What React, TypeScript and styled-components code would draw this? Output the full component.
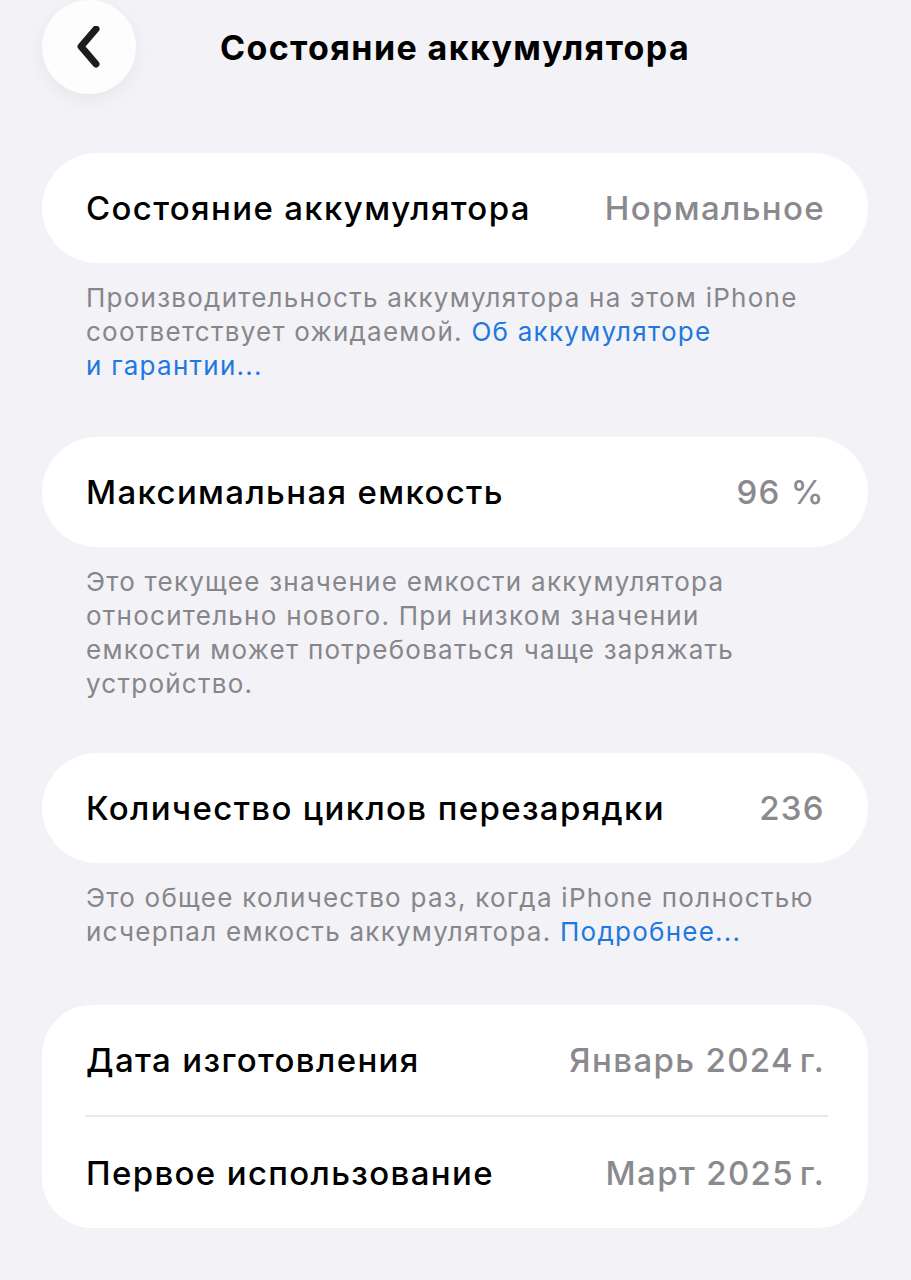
import React from "react";
import styled, { createGlobalStyle } from "styled-components";

const GlobalStyle = createGlobalStyle`
  html, body {
    margin: 0;
    padding: 0;
    background: #f2f2f7;
  }
  body {
    font-family: Inter, "Noto Sans", "Liberation Sans", sans-serif;
    -webkit-font-smoothing: antialiased;
  }
`;

const Page = styled.div`
  min-height: 1280px;
  background: #f2f2f7;
  padding: 0 43px 40px 42px;
  box-sizing: border-box;
`;

const Header = styled.header`
  display: grid;
  grid-template-columns: 94px 1fr 94px;
  align-items: center;
  height: 94px;
  margin-bottom: 59px;
`;

const BackButton = styled.button`
  width: 94px;
  height: 94px;
  border-radius: 50%;
  border: none;
  background: #fdfdfe;
  box-shadow: 0 6px 18px rgba(0, 0, 0, 0.05);
  display: flex;
  align-items: center;
  justify-content: center;
  padding: 0;
  cursor: pointer;
`;

const Title = styled.h1`
  margin: 0;
  text-align: center;
  font-size: 34px;
  font-weight: 700;
  color: #000;
  letter-spacing: 1.4px;
`;

const Section = styled.section<{ $gap?: number }>`
  margin-bottom: ${(p) => p.$gap ?? 54}px;
`;

const Card = styled.div<{ $radius?: number }>`
  background: #fff;
  border-radius: ${(p) => p.$radius ?? 55}px;
  overflow: hidden;
`;

const Row = styled.div<{ $height?: number }>`
  display: flex;
  align-items: center;
  justify-content: space-between;
  height: ${(p) => p.$height ?? 110}px;
  padding: 0 43px 0 44px;
`;

const Divider = styled.div`
  height: 2px;
  background: #e8e8ed;
  margin: 0 40px 0 43px;
`;

const Label = styled.span`
  font-size: 33px;
  color: #000;
  font-weight: 500;
  letter-spacing: 1.35px;
`;

const Value = styled.span`
  font-size: 33px;
  font-weight: 500;
  color: #8a8a8e;
  letter-spacing: 1.35px;
`;

const Footnote = styled.p`
  margin: 18px 0 0;
  padding: 0 20px 0 44px;
  font-size: 26px;
  line-height: 34px;
  color: #86868b;
  letter-spacing: 1.25px;
  white-space: nowrap;
`;

const Link = styled.a`
  color: #1f78e0;
  text-decoration: none;
`;

function ChevronLeft() {
  return (
    <svg width="30" height="42" viewBox="0 0 30 42" fill="none">
      <path
        d="M22 3 L7 20.5 L22 38"
        stroke="#1c1c1e"
        strokeWidth="7"
        strokeLinecap="round"
        strokeLinejoin="round"
      />
    </svg>
  );
}

export default function App() {
  return (
    <>
      <GlobalStyle />
      <Page>
        <Header>
          <BackButton aria-label="Назад">
            <ChevronLeft />
          </BackButton>
          <Title>Состояние аккумулятора</Title>
          <span />
        </Header>

        <Section>
          <Card>
            <Row>
              <Label>Состояние аккумулятора</Label>
              <Value>Нормальное</Value>
            </Row>
          </Card>
          <Footnote>
            Производительность аккумулятора на этом iPhone
            <br />
            соответствует ожидаемой. <Link href="#">Об аккумуляторе</Link>
            <br />
            <Link href="#">и гарантии...</Link>
          </Footnote>
        </Section>

        <Section $gap={52}>
          <Card>
            <Row>
              <Label>Максимальная емкость</Label>
              <Value>96 %</Value>
            </Row>
          </Card>
          <Footnote>
            Это текущее значение емкости аккумулятора
            <br />
            относительно нового. При низком значении
            <br />
            емкости может потребоваться чаще заряжать
            <br />
            устройство.
          </Footnote>
        </Section>

        <Section $gap={56}>
          <Card>
            <Row>
              <Label>Количество циклов перезарядки</Label>
              <Value>236</Value>
            </Row>
          </Card>
          <Footnote>
            Это общее количество раз, когда iPhone полностью
            <br />
            исчерпал емкость аккумулятора. <Link href="#">Подробнее...</Link>
          </Footnote>
        </Section>

        <Section>
          <Card $radius={50}>
            <Row $height={110}>
              <Label>Дата изготовления</Label>
              <Value>Январь 2024{"\u202F"}г.</Value>
            </Row>
            <Divider />
            <Row $height={111}>
              <Label>Первое использование</Label>
              <Value>Март 2025{"\u202F"}г.</Value>
            </Row>
          </Card>
        </Section>
      </Page>
    </>
  );
}
